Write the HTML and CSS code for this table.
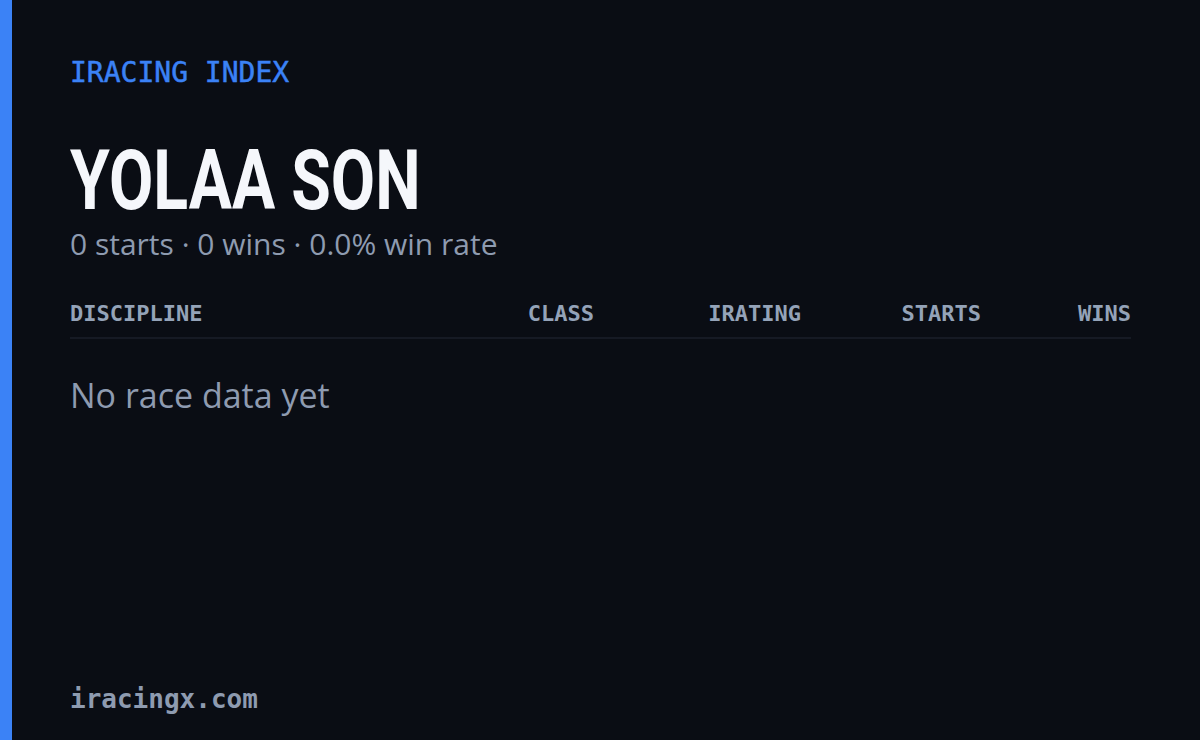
FILE: index.html
```html
<!DOCTYPE html>
<html>
<head>
<meta charset="utf-8">
<link rel="stylesheet" href="styles.css">
</head>
<body>
<div class="card">
  <div class="accent"></div>
  <main class="content">
    <div class="brand">IRACING INDEX</div>
    <h1 class="name"><span class="name-text">YOLAA SON</span></h1>
    <div class="summary">0 starts · 0 wins · 0.0% win rate</div>
    <div class="table">
      <div class="thead">
        <span class="col col-disc">DISCIPLINE</span>
        <span class="col col-class">CLASS</span>
        <span class="col col-ir">IRATING</span>
        <span class="col col-starts">STARTS</span>
        <span class="col col-wins">WINS</span>
      </div>
      <div class="empty">No race data yet</div>
    </div>
    <div class="footer">iracingx.com</div>
  </main>
</div>
</body>
</html>
```

FILE: styles.css
```css
html, body {
  margin: 0;
  padding: 0;
  background: #0a0d14;
}
.card {
  width: 1200px;
  height: 740px;
  display: flex;
  background: #0a0d14;
  overflow: hidden;
}
.accent {
  width: 12px;
  flex: none;
  background: #3b82f6;
}
.content {
  flex: 1;
  display: flex;
  flex-direction: column;
  padding: 56px 69px 26px 58px;
}
.brand {
  font-family: "DejaVu Sans Mono", monospace;
  font-size: 28px;
  line-height: 34px;
  font-weight: 400;
  color: #3b82f6;
  -webkit-text-stroke: 0.5px #3b82f6;
}
.name {
  margin: 51px 0 0 0;
  font-family: Roboto, "Liberation Sans", sans-serif;
  font-weight: 700;
  font-size: 84px;
  line-height: 80px;
  color: #f5f7fb;
}
.name-text {
  display: inline-block;
  transform: scaleX(0.766);
  transform-origin: left center;
}
.summary {
  margin-top: 4px;
  font-family: "Open Sans", sans-serif;
  font-size: 30px;
  line-height: 38px;
  color: #8e9bb0;
}
.table {
  margin-top: 38px;
}
.thead {
  display: grid;
  grid-template-columns: 1fr 160px 207px 180px 150px;
  border-bottom: 2px solid #161a24;
  padding-bottom: 10px;
  font-family: "DejaVu Sans Mono", monospace;
  font-weight: 700;
  font-size: 22px;
  line-height: 26px;
  color: #94a3b8;
}
.col {
  text-align: right;
}
.col-disc {
  text-align: left;
}
.empty {
  margin-top: 36px;
  font-family: "Open Sans", sans-serif;
  font-size: 34px;
  line-height: 40px;
  color: #8e9bb0;
}
.footer {
  margin-top: auto;
  font-family: "DejaVu Sans Mono", monospace;
  font-weight: 700;
  font-size: 26px;
  line-height: 30px;
  color: #8e9bb0;
}
```
